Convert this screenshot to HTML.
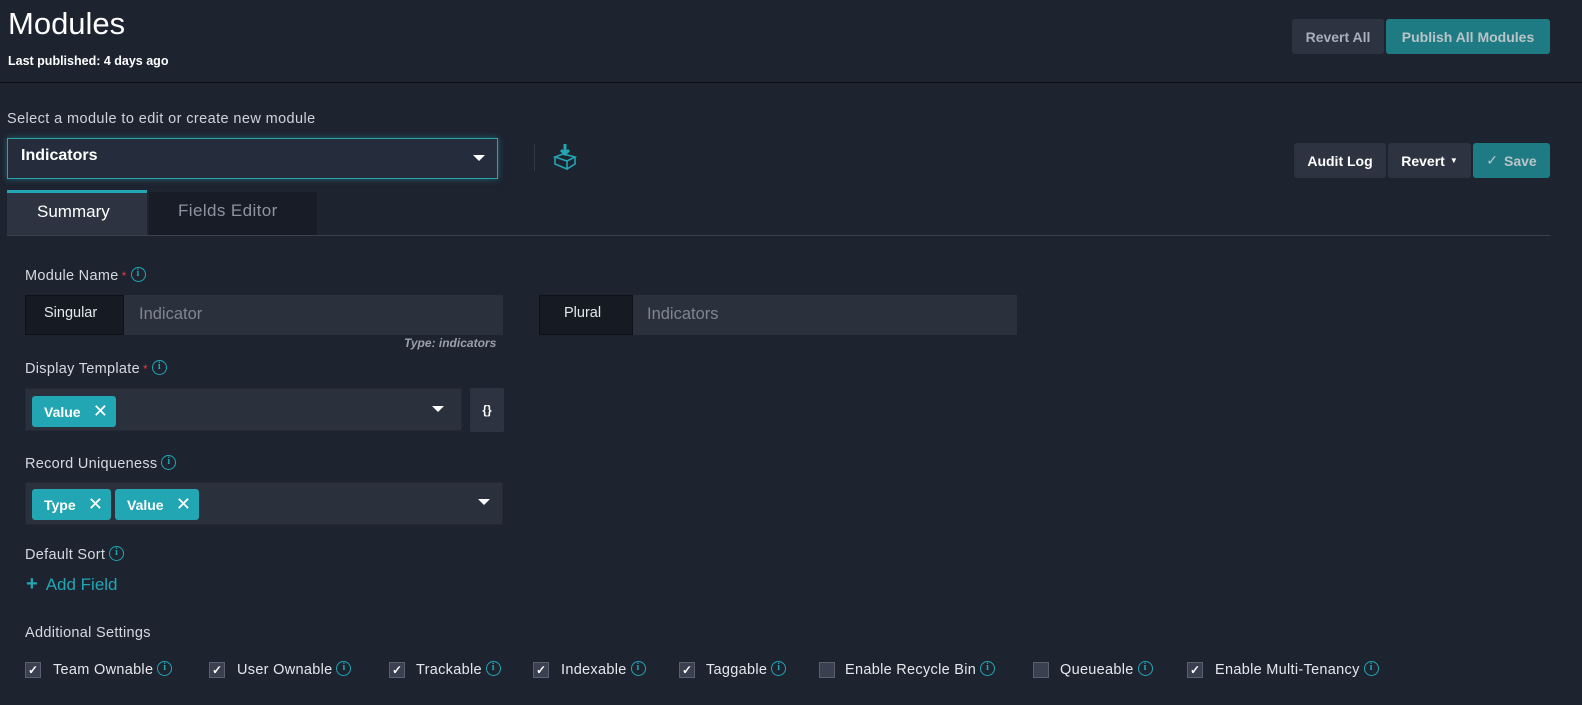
<!DOCTYPE html>
<html><head><meta charset="utf-8"><style>
*{box-sizing:border-box;margin:0;padding:0}
body{width:1582px;height:705px;background:#1e2330;font-family:"Liberation Sans",sans-serif;color:#e4e7ec;position:relative;overflow:hidden}
.a{position:absolute;white-space:nowrap}
.btn{position:absolute;border-radius:3px;font-size:14px;font-weight:bold;display:flex;align-items:center;justify-content:center}
.info{display:inline-block;width:15px;height:15px;border:1.5px solid #22a6b3;border-radius:50%;color:#22a6b3;font-size:10px;font-weight:bold;text-align:center;line-height:12px;vertical-align:middle;position:relative;top:-2px;margin-left:4px;font-family:"Liberation Serif",serif}
.lbl{font-size:14.5px;color:#d5d9e0;letter-spacing:.3px}
.req{color:#e03b3b;font-size:12px;margin-left:3px}
.tag{position:absolute;background:#22a6b3;border-radius:3px;color:#fff;font-size:14px;font-weight:bold;height:31px;display:flex;align-items:center;padding-left:12px}
.tag span{margin-left:auto;margin-right:8px;font-weight:normal;font-size:18px}
.cb{position:absolute;top:662px;width:16px;height:16px;background:#3a4050;border:1px solid #5a6070;color:#fff;font-size:12px;text-align:center;line-height:14px;font-weight:bold}
.cl{position:absolute;top:662px;font-size:14.5px;color:#e4e7ec;letter-spacing:.3px}
.caret{position:absolute;width:0;height:0;border-left:6px solid transparent;border-right:6px solid transparent;border-top:6px solid #fff}
</style></head><body>
<div class="a" style="left:8px;top:6px;font-size:31px;color:#fff">Modules</div>
<div class="a" style="left:8px;top:54px;font-size:12.5px;font-weight:bold;color:#fff">Last published: 4 days ago</div>
<div class="btn" style="left:1292px;top:19px;width:92px;height:35px;background:#2d3340;color:#a9afba">Revert All</div>
<div class="btn" style="left:1386px;top:19px;width:164px;height:35px;background:#1e7b83;color:#b9c4c8">Publish All Modules</div>
<div class="a" style="left:0;top:82px;width:1582px;height:1px;background:#0d0f14"></div>

<div class="a" style="left:7px;top:111px;font-size:14.5px;color:#cfd3da;letter-spacing:.4px">Select a module to edit or create new module</div>
<div class="a" style="left:7px;top:138px;width:491px;height:41px;background:#252d3c;border:1px solid #2aa3ad;box-shadow:0 0 6px rgba(42,163,173,.5)"></div>
<div class="a" style="left:21px;top:147px;font-size:16px;font-weight:bold;color:#fff">Indicators</div>
<div class="caret" style="left:473px;top:155px"></div>
<div class="a" style="left:534px;top:144px;width:1px;height:27px;background:#343a47"></div>
<svg class="a" style="left:552px;top:143px" width="26" height="28" viewBox="0 0 26 28" fill="none" stroke="#22a6b3" stroke-width="1.6"><path d="M13 1v9M9 7l4 4 4-4" stroke-width="3"/><path d="M3 14l8-3 12 3-8 4zM3 14v7l12 5v-8M23 14v7l-8 5"/></svg>

<div class="btn" style="left:1294px;top:143px;width:92px;height:35px;background:#2d3340;color:#fff">Audit Log</div>
<div class="btn" style="left:1388px;top:143px;width:83px;height:35px;background:#2d3340;color:#fff">Revert <span style="font-size:8px;margin-left:5px">▼</span></div>
<div class="btn" style="left:1473px;top:143px;width:77px;height:35px;background:#1e7b83;color:#b9c4c8"><span style="font-weight:normal;margin-right:6px">✓</span>Save</div>

<div class="a" style="left:7px;top:190px;width:140px;height:46px;background:#2d3340;border-top:3px solid #22a6b3"></div>
<div class="a" style="left:37px;top:202px;font-size:17px;color:#fff">Summary</div>
<div class="a" style="left:149px;top:192px;width:168px;height:44px;background:#181c26"></div>
<div class="a" style="left:178px;top:201px;font-size:17px;color:#8d93a0;letter-spacing:.4px">Fields Editor</div>
<div class="a" style="left:7px;top:235px;width:1543px;height:1px;background:#3a404c"></div>

<div class="a lbl" style="left:25px;top:268px">Module Name<span class="req">*</span><span class="info">i</span></div>
<div class="a" style="left:25px;top:295px;width:99px;height:40px;background:#161a22;border:1px solid #0e1117"></div>
<div class="a" style="left:44px;top:305px;font-size:14.5px;color:#e4e7ec">Singular</div>
<div class="a" style="left:124px;top:295px;width:379px;height:40px;background:#2b313c"></div>
<div class="a" style="left:139px;top:305px;font-size:16.5px;color:#7f8591">Indicator</div>
<div class="a" style="left:404px;top:336px;font-size:12px;font-style:italic;font-weight:bold;color:#9aa0aa">Type: indicators</div>
<div class="a" style="left:539px;top:295px;width:94px;height:40px;background:#161a22;border:1px solid #0e1117"></div>
<div class="a" style="left:564px;top:305px;font-size:14.5px;color:#e4e7ec">Plural</div>
<div class="a" style="left:633px;top:295px;width:384px;height:40px;background:#2b313c"></div>
<div class="a" style="left:647px;top:305px;font-size:16.5px;color:#7f8591">Indicators</div>

<div class="a lbl" style="left:25px;top:361px">Display Template<span class="req">*</span><span class="info">i</span></div>
<div class="a" style="left:25px;top:388px;width:437px;height:43px;background:#2b313c;border:1px solid #232833"></div>
<div class="tag" style="left:32px;top:396px;width:84px">Value<span>✕</span></div>
<div class="caret" style="left:432px;top:406px"></div>
<div class="a" style="left:470px;top:388px;width:34px;height:44px;background:#2d3340;border-radius:2px;color:#fff;font-size:12px;font-weight:bold;text-align:center;line-height:44px">{}</div>

<div class="a lbl" style="left:25px;top:456px">Record Uniqueness<span class="info">i</span></div>
<div class="a" style="left:25px;top:482px;width:478px;height:43px;background:#2b313c;border:1px solid #232833"></div>
<div class="tag" style="left:32px;top:489px;width:79px">Type<span>✕</span></div>
<div class="tag" style="left:115px;top:489px;width:84px">Value<span>✕</span></div>
<div class="caret" style="left:478px;top:499px"></div>

<div class="a lbl" style="left:25px;top:547px">Default Sort<span class="info">i</span></div>
<div class="a" style="left:26px;top:573px;font-size:17px;color:#22a6b3"><b style="font-size:20px;margin-right:8px">+</b>Add Field</div>
<div class="a lbl" style="left:25px;top:625px">Additional Settings</div>

<div class="cb" style="left:25px">✓</div><div class="cl" style="left:53px">Team Ownable<span class="info">i</span></div>
<div class="cb" style="left:209px">✓</div><div class="cl" style="left:237px">User Ownable<span class="info">i</span></div>
<div class="cb" style="left:389px">✓</div><div class="cl" style="left:416px">Trackable<span class="info">i</span></div>
<div class="cb" style="left:533px">✓</div><div class="cl" style="left:561px">Indexable<span class="info">i</span></div>
<div class="cb" style="left:679px">✓</div><div class="cl" style="left:706px">Taggable<span class="info">i</span></div>
<div class="cb" style="left:819px"></div><div class="cl" style="left:845px">Enable Recycle Bin<span class="info">i</span></div>
<div class="cb" style="left:1033px"></div><div class="cl" style="left:1060px">Queueable<span class="info">i</span></div>
<div class="cb" style="left:1187px">✓</div><div class="cl" style="left:1215px">Enable Multi-Tenancy<span class="info">i</span></div>
</body></html>
